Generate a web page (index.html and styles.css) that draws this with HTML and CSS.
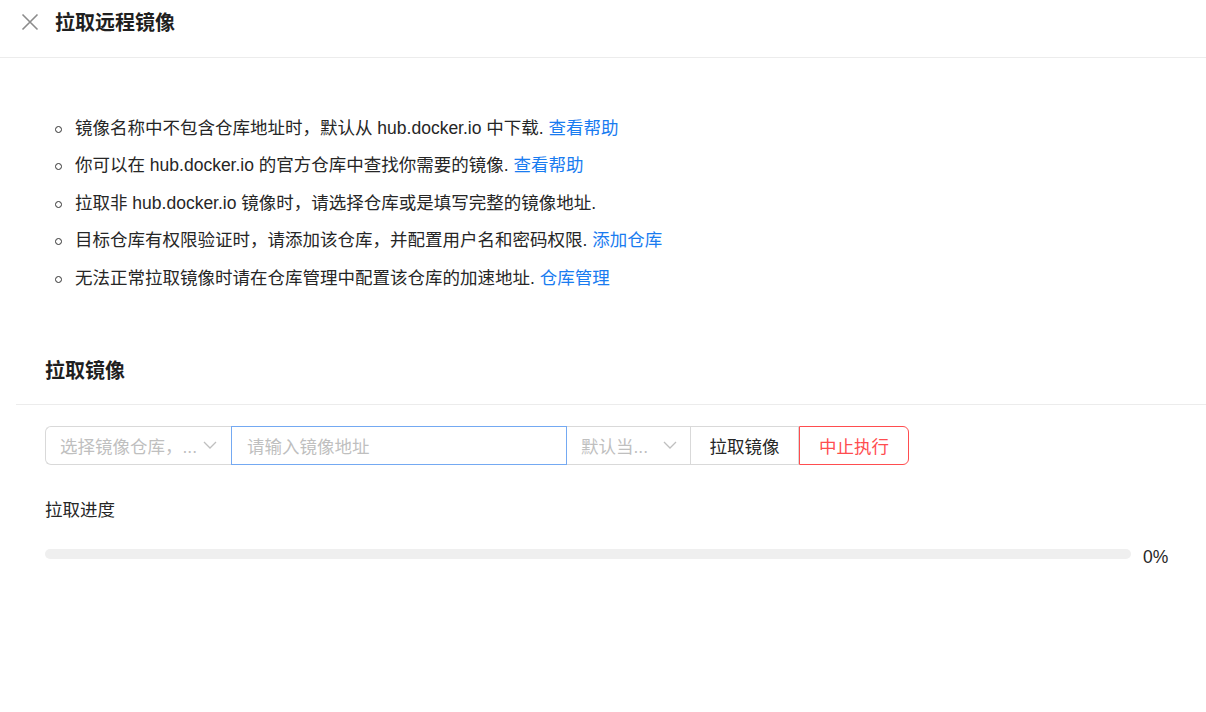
FILE: index.html
```html
<!DOCTYPE html>
<html lang="zh-CN">
<head>
<meta charset="utf-8">
<link rel="stylesheet" href="styles.css">
</head>
<body>
<div class="page">
  <header class="header">
    <span class="close">
      <svg width="18" height="18" viewBox="0 0 18 18"><path d="M1.5 1.5 L16.5 16.5 M16.5 1.5 L1.5 16.5" stroke="#8c8c8c" stroke-width="1.6" fill="none"/></svg>
    </span>
    <h1 class="title">拉取远程镜像</h1>
  </header>
  <ul class="tips">
    <li>镜像名称中不包含仓库地址时，默认从 hub.docker.io 中下载. <a class="link">查看帮助</a></li>
    <li>你可以在 hub.docker.io 的官方仓库中查找你需要的镜像. <a class="link">查看帮助</a></li>
    <li>拉取非 hub.docker.io 镜像时，请选择仓库或是填写完整的镜像地址.</li>
    <li>目标仓库有权限验证时，请添加该仓库，并配置用户名和密码权限. <a class="link">添加仓库</a></li>
    <li>无法正常拉取镜像时请在仓库管理中配置该仓库的加速地址. <a class="link">仓库管理</a></li>
  </ul>
  <h2 class="section-title">拉取镜像</h2>
  <div class="divider"></div>
  <div class="form">
    <div class="group">
      <div class="select sel-repo">
        <span class="ph">选择镜像仓库，...</span>
        <svg class="arrow" width="14" height="8" viewBox="0 0 14 8"><path d="M1 1 L7 7 L13 1" stroke="#bfbfbf" stroke-width="1.3" fill="none"/></svg>
      </div>
      <div class="input"><span class="ph">请输入镜像地址</span></div>
      <div class="select sel-tag">
        <span class="ph">默认当...</span>
        <svg class="arrow" width="14" height="8" viewBox="0 0 14 8"><path d="M1 1 L7 7 L13 1" stroke="#bfbfbf" stroke-width="1.3" fill="none"/></svg>
      </div>
      <button class="btn">拉取镜像</button>
      <button class="btn btn-danger">中止执行</button>
    </div>
    <div class="label">拉取进度</div>
    <div class="progress">
      <div class="track"><div class="fill" style="width:0%"></div></div>
      <span class="pct">0%</span>
    </div>
  </div>
</div>
</body>
</html>
```
FILE: styles.css
```css
* { box-sizing: border-box; }
html, body { margin: 0; padding: 0; background: #fff; }
body {
  font-family: "Liberation Sans", "Noto Sans CJK SC", sans-serif;
  color: #262626;
  font-size: 17.5px;
}
.page { width: 1206px; height: 712px; overflow: hidden; }
.header {
  height: 58px;
  display: flex;
  align-items: center;
  padding: 0 0 14px 21px;
  border-bottom: 1px solid #ececec;
}
.close { display: flex; width: 18px; height: 18px; margin-right: 16px; }
.title {
  margin: 0;
  font-family: "Noto Sans CJK SC", sans-serif;
  font-size: 20px;
  font-weight: 700;
  color: #1f1f1f;
  line-height: 1;
}
.tips {
  margin: 0;
  padding: 52px 0 0 75px;
  list-style: none;
}
.tips li {
  position: relative;
  height: 37.4px;
  line-height: 37.4px;
  white-space: nowrap;
}
.tips li::before {
  content: "";
  position: absolute;
  left: -20px;
  top: 16px;
  width: 5px;
  height: 5px;
  border: 1.3px solid #333;
  border-radius: 50%;
}
.link { color: #1a7cf0; cursor: pointer; }
.section-title {
  margin: 59px 0 0 45px;
  font-family: "Noto Sans CJK SC", sans-serif;
  font-size: 20px;
  font-weight: 700;
  color: #1f1f1f;
  line-height: 28px;
}
.divider {
  margin: 20px 0 0 16px;
  height: 1px;
  background: #ececec;
}
.form { padding: 21px 0 0 45px; }
.group { display: flex; height: 39px; }
.select, .input {
  display: flex;
  align-items: center;
  height: 39px;
  border: 1px solid #d9d9d9;
  padding: 0 14px;
  background: #fff;
}
.ph { color: #bfbfbf; white-space: nowrap; overflow: hidden; }
.sel-repo {
  width: 186px;
  border-radius: 6px 0 0 6px;
  justify-content: space-between;
  border-right: none;
}
.input {
  width: 336px;
  border-color: #74a9f2;
  padding-left: 15px;
}
.sel-tag {
  width: 124px;
  justify-content: space-between;
  border-left: none;
  padding-right: 13px;
}
.arrow { flex: none; }
.btn {
  height: 39px;
  border: 1px solid #d9d9d9;
  border-left: none;
  background: #fff;
  font: inherit;
  color: #262626;
  padding: 0;
  width: 108px;
}
.btn-danger {
  width: 110px;
  border: 1px solid #ff4d4f;
  color: #ff4d4f;
  border-radius: 0 6px 6px 0;
}
.label { margin-top: 33px; line-height: 24px; }
.progress {
  display: flex;
  align-items: center;
  margin-top: 20px;
}
.track {
  width: 1086px;
  height: 10px;
  background: #efefef;
  border-radius: 5px;
}
.fill { height: 100%; background: #1a7cf0; border-radius: 5px; }
.pct { margin-left: 12px; margin-top: 5px; line-height: 20px; }
```
